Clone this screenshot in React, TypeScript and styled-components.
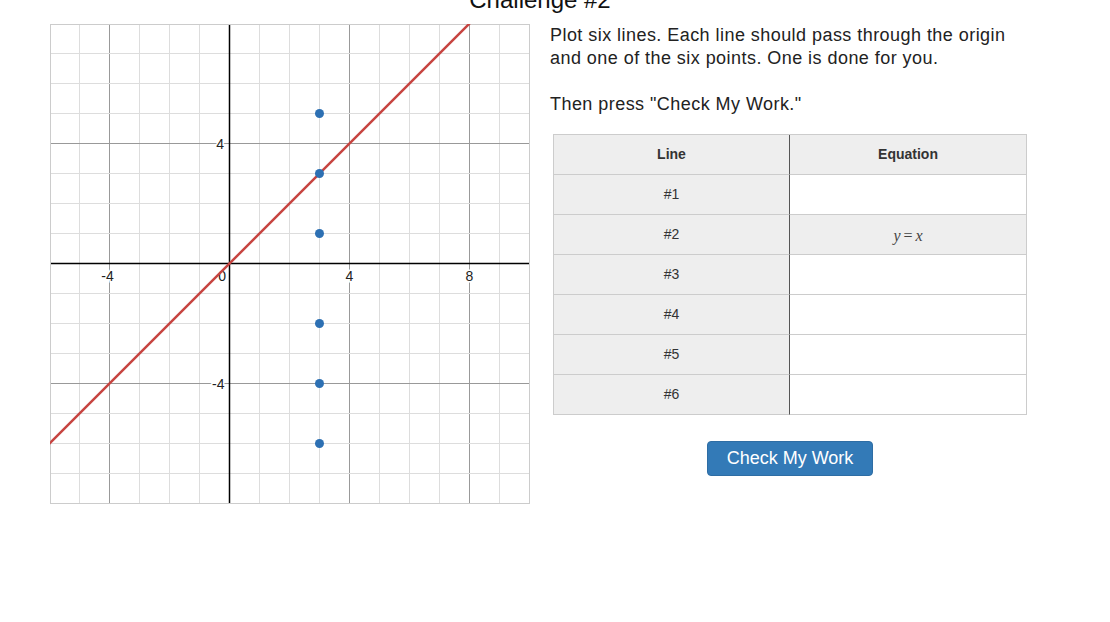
import React from "react";
import styled, { createGlobalStyle } from "styled-components";

const GlobalStyle = createGlobalStyle`
  html, body {
    margin: 0;
    padding: 0;
    background: #ffffff;
    overflow: hidden;
  }
  body {
    font-family: "Liberation Sans", Arial, sans-serif;
    color: #222;
  }
`;

const Page = styled.div`
  width: 980px;
  padding-left: 50px;
`;

const Title = styled.h1`
  margin: -14px 0 0;
  font-size: 24px;
  line-height: 28px;
  font-weight: normal;
  text-align: center;
  color: #111;
`;

const Content = styled.div`
  display: flex;
  align-items: flex-start;
  gap: 20px;
  margin-top: 10px;
`;

const GraphBox = styled.div`
  width: 480px;
  height: 480px;
  flex: none;
`;

const Side = styled.div`
  width: 480px;
`;

const Para = styled.p<{ $gap?: number }>`
  margin: ${(p) => p.$gap ?? 0}px 0 0;
  font-size: 18px;
  line-height: 23px;
  letter-spacing: 0.45px;
  color: #222;
`;

const Grid = styled.div`
  width: 474px;
  margin: 18px auto 0;
  box-sizing: border-box;
  border: 1px solid #ccc;
  border-bottom: none;
  display: grid;
  grid-template-columns: 1fr 1fr;
`;

const Cell = styled.div<{ $head?: boolean; $shade?: boolean; $left?: boolean }>`
  height: 40px;
  box-sizing: border-box;
  border-bottom: 1px solid #ccc;
  border-right: ${(p) => (p.$left ? "1px solid #555" : "none")};
  background: ${(p) => (p.$shade ? "#eeeeee" : "#ffffff")};
  display: flex;
  align-items: center;
  justify-content: center;
  padding-bottom: 2px;
  font-size: 14px;
  font-weight: ${(p) => (p.$head ? "bold" : "normal")};
  color: #333;
`;

const MathText = styled.span`
  margin-top: 4px;
  font-family: "Liberation Serif", "Times New Roman", serif;
  font-size: 16px;
  color: #444;
  i {
    font-style: italic;
  }
  b {
    font-weight: normal;
    margin: 0 3px;
  }
`;

const CheckButton = styled.button`
  display: block;
  margin: 26px auto 0;
  padding: 6px 19px;
  font-family: "Liberation Sans", Arial, sans-serif;
  font-size: 18px;
  line-height: 21px;
  color: #fff;
  background: #337ab7;
  border: 1px solid #2e6da4;
  border-radius: 4px;
  cursor: pointer;
`;

const UNIT = 30;
const OX = 179.5;
const OY = 239.5;
const px = (x: number) => OX + x * UNIT;
const py = (y: number) => OY - y * UNIT;

const points = [5, 3, 1, -2, -4, -6];

function Graph() {
  const lines: React.ReactNode[] = [];
  for (let i = -5; i <= 9; i++) {
    if (i === 0) continue;
    const major = i % 4 === 0;
    lines.push(
      <line
        key={"v" + i}
        x1={px(i)}
        x2={px(i)}
        y1={0}
        y2={480}
        stroke={major ? "#999" : "#ddd"}
        strokeWidth={1}
      />
    );
  }
  for (let j = -7; j <= 7; j++) {
    if (j === 0) continue;
    const major = j % 4 === 0;
    lines.push(
      <line
        key={"h" + j}
        x1={0}
        x2={480}
        y1={py(j)}
        y2={py(j)}
        stroke={major ? "#999" : "#ddd"}
        strokeWidth={1}
      />
    );
  }
  const label = {
    fontFamily: "'Liberation Sans', Arial, sans-serif",
    fontSize: 14,
    fill: "#222",
    stroke: "#fff",
    strokeWidth: 3,
    paintOrder: "stroke" as const,
  };
  return (
    <svg width="480" height="480" viewBox="0 0 480 480">
      <rect x="0" y="0" width="480" height="480" fill="#fff" />
      {lines}
      <line x1={px(0)} x2={px(0)} y1={0} y2={480} stroke="#000" strokeWidth={1.5} />
      <line x1={0} x2={480} y1={py(0)} y2={py(0)} stroke="#000" strokeWidth={1.5} />
      <rect x="0.5" y="0.5" width="479" height="479" fill="none" stroke="#ccc" />
      <text {...label} x={px(-4) - 2} y={257} textAnchor="middle">-4</text>
      <text {...label} x={px(0) - 3.5} y={257} textAnchor="end">0</text>
      <text {...label} x={px(4)} y={257} textAnchor="middle">4</text>
      <text {...label} x={px(8)} y={257} textAnchor="middle">8</text>
      <text {...label} x={px(0) - 5.5} y={py(4) + 5} textAnchor="end">4</text>
      <text {...label} x={px(0) - 5} y={py(-4) + 5} textAnchor="end">-4</text>
      <line
        x1={px(-6.2)}
        y1={py(-6.2)}
        x2={px(8.2)}
        y2={py(8.2)}
        stroke="#c74440"
        strokeWidth={2.5}
      />
      {points.map((y) => (
        <circle key={y} cx={px(3)} cy={py(y)} r={4.5} fill="#2d70b3" />
      ))}
    </svg>
  );
}

const rows = ["#1", "#2", "#3", "#4", "#5", "#6"];

export default function App() {
  return (
    <>
      <GlobalStyle />
      <Page>
        <Title>Challenge #2</Title>
        <Content>
          <GraphBox>
            <Graph />
          </GraphBox>
          <Side>
            <Para>
              Plot six lines. Each line should pass through the origin and one of
              the six points. One is done for you.
            </Para>
            <Para $gap={23}>Then press "Check My Work."</Para>
            <Grid>
              <Cell $head $shade $left>Line</Cell>
              <Cell $head $shade>Equation</Cell>
              {rows.map((r, i) => (
                <React.Fragment key={r}>
                  <Cell $shade $left>{r}</Cell>
                  <Cell $shade={i === 1}>
                    {i === 1 && (
                      <MathText>
                        <i>y</i>
                        <b>=</b>
                        <i>x</i>
                      </MathText>
                    )}
                  </Cell>
                </React.Fragment>
              ))}
            </Grid>
            <CheckButton>Check My Work</CheckButton>
          </Side>
        </Content>
      </Page>
    </>
  );
}
